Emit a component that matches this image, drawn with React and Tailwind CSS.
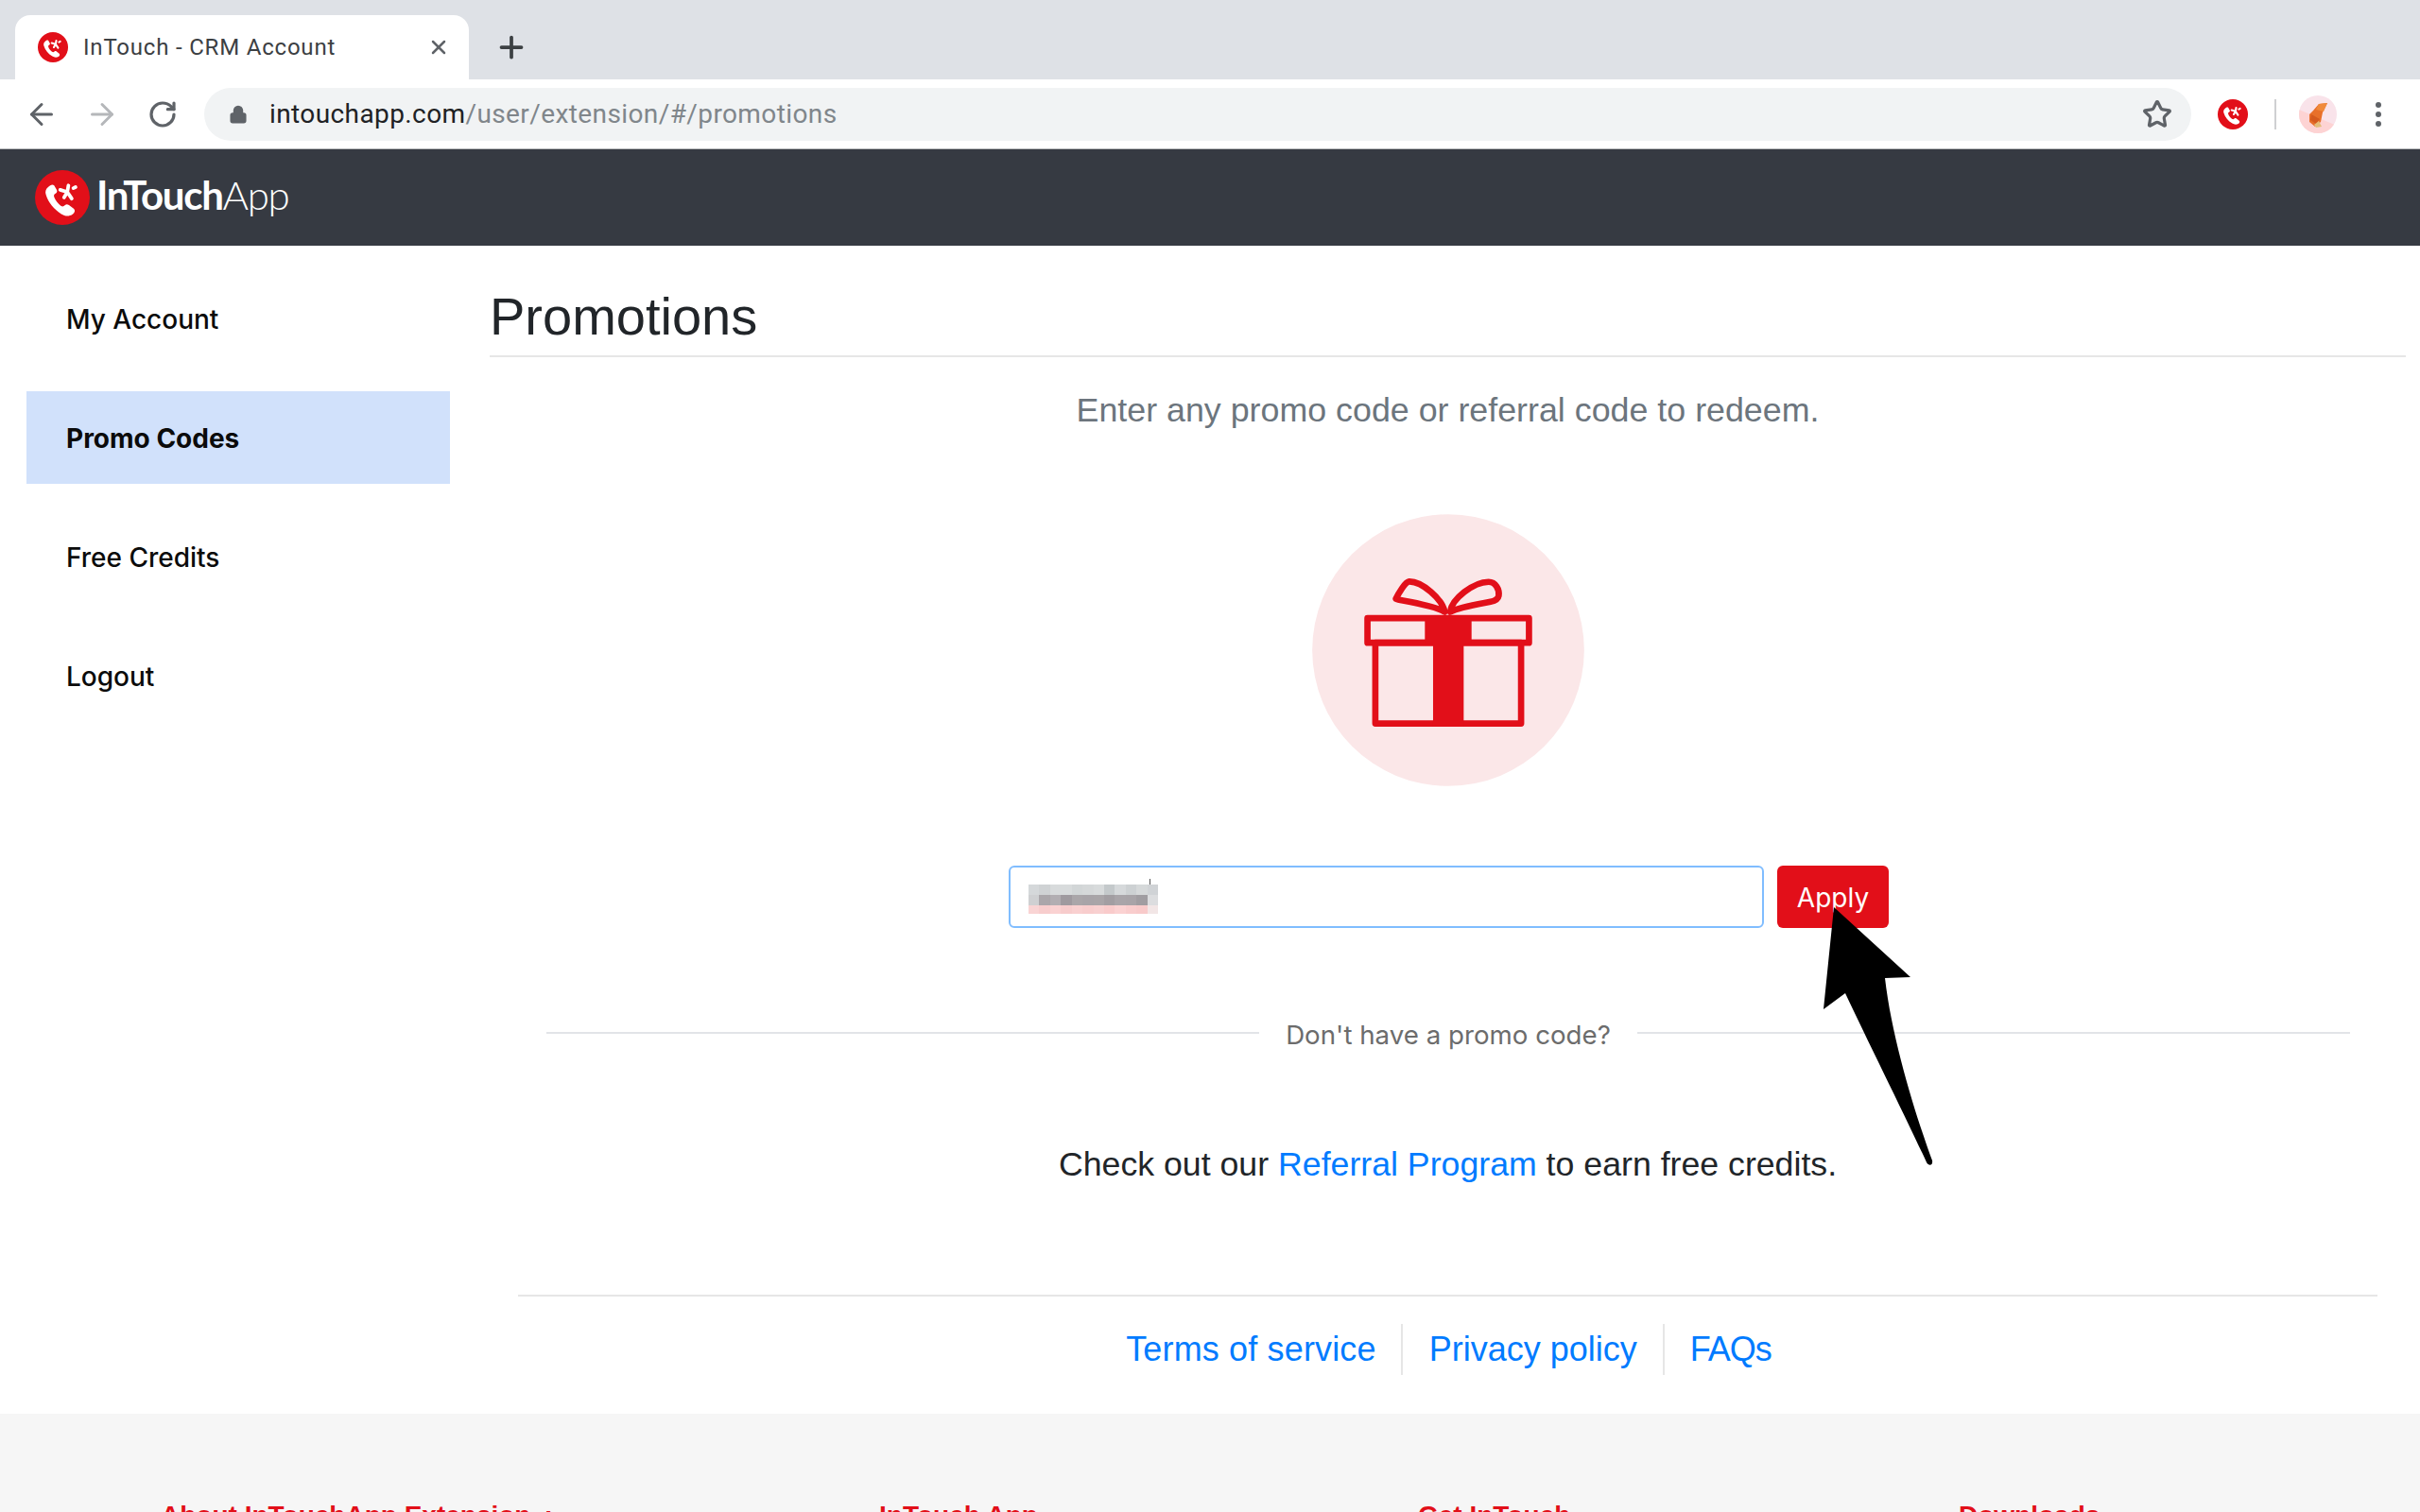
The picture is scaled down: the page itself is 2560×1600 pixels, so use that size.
import React from "react";
import { ArrowLeft, ArrowRight, RotateCw, Lock, Star, X, Plus } from "lucide-react";

const NAV_ITEMS = [
  { label: "My Account" },
  { label: "Promo Codes", active: true },
  { label: "Free Credits" },
  { label: "Logout" },
];

const FOOTER_HEADINGS = [
  { label: "About InTouchApp Extension", suffix: ":", width: "w-[760px]" },
  { label: "InTouch App", width: "w-[570px]" },
  { label: "Get InTouch", width: "w-[572px]" },
  { label: "Downloads", width: "w-[300px]" },
];

function LogoMark({ className }) {
  return (
    <svg viewBox="0 0 100 100" className={className}>
      <circle cx="50" cy="50" r="50" fill="#e20f19" />
      <path
        d="M24 31c-4 3-6 8-4 14 4 14 15 27 28 35 6 4 14 5 20 1 5-3 6-8 2-11l-8-6c-3-2-5-2-7 0-3 3-5 3-8 1-5-4-10-10-12-16-1-3 0-5 2-6 4-2 4-5 2-8l-4-7c-3-3-7-1-11 3z"
        fill="#fff"
      />
      <path
        d="M59 40L61 28M59 40L46 36M59 40L67 52M59 40L53 50M70 33L74 31"
        fill="none"
        stroke="#fff"
        strokeWidth="6.5"
        strokeLinecap="round"
      />
    </svg>
  );
}

function Avatar() {
  return (
    <svg viewBox="0 0 40 40" className="w-10 h-10">
      <clipPath id="avatar-clip">
        <circle cx="20" cy="20" r="20" />
      </clipPath>
      <g clipPath="url(#avatar-clip)">
        <rect width="40" height="40" fill="#f9e3ea" />
        <path d="M0 15L40 32V40H0z" fill="#fdd3d3" />
        <path d="M30 8L21 9L15 16L11 20L11 28L17 33L23 28L25 18z" fill="#e8702a" />
        <path d="M30 8L21 9L18 15L26 17z" fill="#f08a3c" />
        <path d="M13 20L22 25L18 30L12 26z" fill="#d55a1e" />
        <path d="M16 31L21 27L24 33L18 34z" fill="#e3bd78" />
      </g>
    </svg>
  );
}

function GiftIcon() {
  return (
    <svg viewBox="85 42 862 863" className="w-[288px] h-[288px]">
      <circle cx="516" cy="473.5" r="431" fill="#fbe7e8" />
      <g fill="none" stroke="#e20f19" strokeWidth="20" strokeLinejoin="round">
        <rect x="260" y="372" width="512" height="78" />
        <rect x="285" y="450" width="462" height="256" />
        <path d="M505 352c-8-40-72-97-113-96-12 1-34 38-42 55 0 3 120 18 155 41z" />
        <path d="M522 352c6-42 74-94 122-95 22 0 35 24 32 44-2 12-12 16-26 19-30 6-96 16-128 32z" />
      </g>
      <path d="M442 372h148v78h-25v266h-97V450h-26z" fill="#e20f19" />
    </svg>
  );
}

function BlurredCode() {
  const rows = [
    { y: 6, h: 11, fills: ["#d5d8da", "#cfd2d4", "#d8dbdc", "#d8dbdc", "#d2d6d7", "#d5d8d9", "#d8dbdc", "#c4c9cb", "#d6d9db", "#cdd1d3", "#d6d9da", "#d0d3d6"] },
    { y: 17, h: 11, fills: ["#cfd0d2", "#aaa6aa", "#b2aeb2", "#9f9a9f", "#aaa6a9", "#a8a4a8", "#a9a5a8", "#a29ea2", "#a9a5a9", "#a8a4a8", "#a09da1", "#dcdddf"] },
    { y: 28, h: 9, fills: ["#f9d4d4", "#f7cdcd", "#fad2d2", "#f7cccc", "#f9d0d0", "#f8cdcd", "#f8d0d0", "#f9cbcb", "#fbd2d2", "#f9cdcd", "#f8caca", "#f2e6e6"] },
  ];
  return (
    <svg viewBox="0 0 137 37" className="w-[137px] h-[37px] -mt-[2px]" shapeRendering="crispEdges">
      <rect x="128" y="0" width="1" height="6" fill="#555" />
      {rows.map((row) =>
        row.fills.map((fill, c) => (
          <rect key={`${row.y}-${c}`} x={c * 11.42} y={row.y} width="11.5" height={row.h} fill={fill} />
        ))
      )}
    </svg>
  );
}

function BrowserChrome() {
  return (
    <div className="shrink-0">
      {/* Tab strip */}
      <div className="h-[84px] bg-[#dee1e6] flex items-end pl-4">
        <div className="w-[480px] h-[68px] bg-white rounded-t-[16px] flex items-center pl-6 pr-[20px]">
          <LogoMark className="w-8 h-8 shrink-0" />
          <span className="ml-[16px] text-[24px] text-[#3c4043] font-['Roboto',sans-serif] tracking-[0.8px]">InTouch - CRM Account</span>
          <X className="ml-auto w-[24px] h-[24px] text-[#5f6368]" strokeWidth={2.5} />
        </div>
        <div className="ml-[27px] mb-[16px] text-[#3c4043]">
          <Plus className="w-[36px] h-[36px]" strokeWidth={2.5} />
        </div>
      </div>
      {/* Toolbar */}
      <div className="h-[73px] bg-white flex items-center pl-[26px]">
        <ArrowLeft className="w-[36px] h-[36px] text-[#5f6368] shrink-0" strokeWidth={2} />
        <ArrowRight className="ml-[28px] w-[36px] h-[36px] text-[#b5b7ba] shrink-0" strokeWidth={2} />
        <RotateCw className="ml-[30px] w-[32px] h-[32px] text-[#5f6368] shrink-0" strokeWidth={2.4} />
        <div className="ml-[28px] w-[2102px] h-[56px] shrink-0 rounded-full bg-[#f1f3f4] flex items-center pl-[26px] pr-[20px]">
          <Lock className="w-[20px] h-[20px] text-[#5f6368] fill-[#5f6368] shrink-0" strokeWidth={2.5} />
          <div className="ml-[23px] text-[28px] font-['Roboto',sans-serif] text-[#202124] tracking-[0.4px]">
            intouchapp.com<span className="text-[#80868b]">/user/extension/#/promotions</span>
          </div>
          <Star className="ml-auto w-[32px] h-[32px] text-[#5f6368]" strokeWidth={2.4} />
        </div>
        <LogoMark className="ml-[28px] w-8 h-8 shrink-0" />
        <div className="ml-[28px] w-[2px] h-8 bg-[#cfd0d2] shrink-0" />
        <div className="ml-[24px] shrink-0">
          <Avatar />
        </div>
        <div className="ml-[41px] flex flex-col gap-[4px] shrink-0">
          <div className="w-[6px] h-[6px] rounded-full bg-[#5f6368]" />
          <div className="w-[6px] h-[6px] rounded-full bg-[#5f6368]" />
          <div className="w-[6px] h-[6px] rounded-full bg-[#5f6368]" />
        </div>
      </div>
    </div>
  );
}

function Sidebar() {
  return (
    <div className="w-[518px] shrink-0 pl-[28px] pr-[42px] pt-[28px] flex flex-col gap-[28px]">
      {NAV_ITEMS.map((item) => (
        <div
          key={item.label}
          className={`h-[98px] flex items-center pl-[42px] pt-[2px] text-[28px] text-[#0b0b0b] font-['Inter',sans-serif] ${
            item.active ? "bg-[#d1e1fb] font-bold" : "font-medium"
          }`}
        >
          {item.label}
        </div>
      ))}
    </div>
  );
}

function Main() {
  return (
    <div className="w-[2027px] flex flex-col font-['Liberation_Sans',sans-serif]">
      <div className="h-[118px] border-b-2 border-[#e6e6e6] flex items-end pb-[5px]">
        <h1 className="text-[56px] leading-[72px] text-[#212529]">Promotions</h1>
      </div>
      <p className="mt-[29px] text-center text-[35.8px] leading-[54px] text-[#6c757d]">
        Enter any promo code or referral code to redeem.
      </p>
      <div className="mt-[83px] flex justify-center">
        <GiftIcon />
      </div>
      <div className="mt-[84px] flex justify-center gap-[14px] pl-[2px]">
        <div className="w-[799px] h-[66px] rounded-[6px] border-2 border-[#80bdff] flex items-center pl-[19px]">
          <BlurredCode />
        </div>
        <button className="w-[118px] h-[66px] pt-[1px] rounded-[6px] bg-[#e20f19] text-white text-[28px] font-['Inter',sans-serif]">
          Apply
        </button>
      </div>
      <div className="mt-[93px] ml-[60px] mr-[59px] flex items-center gap-[28px]">
        <div className="flex-1 h-[2px] mb-[6px] bg-[#e2e4e8]" />
        <span className="text-[27.7px] text-[#6c6c6c] font-['Inter',sans-serif]">Don't have a promo code?</span>
        <div className="flex-1 h-[2px] mb-[6px] bg-[#e2e4e8]" />
      </div>
      <p className="mt-[88px] text-center text-[35.7px] leading-[54px] text-[#212529]">
        Check out our <span className="text-[#007bff]">Referral Program</span> to earn free credits.
      </p>
      <div className="mt-[111px] mx-[30px] border-t-2 border-[#e6e6e6] flex justify-center pt-[29px]">
        <div className="ml-[2px] flex items-center text-[36px] leading-[54px] text-[#007bff]">
          <span className="pr-[26px] border-r-2 border-[#e6e6e6] tracking-[0.15px]">Terms of service</span>
          <span className="pl-[28px] pr-[27px] border-r-2 border-[#e6e6e6]">Privacy policy</span>
          <span className="pl-[27px] tracking-[-1px]">FAQs</span>
        </div>
      </div>
    </div>
  );
}

export default function App() {
  return (
    <div className="relative w-[2560px] h-[1600px] overflow-hidden bg-white flex flex-col">
      <BrowserChrome />
      <div className="h-[103px] shrink-0 bg-[#363a42] border-t border-[#b9bbbd] flex items-center pl-[37px]">
        <LogoMark className="w-[58px] h-[58px] shrink-0" />
        <div className="ml-[7px] mb-[6px] text-[42px] leading-none text-white font-['Lato',sans-serif] tracking-[-1.3px] font-bold">
          InTouch<span className="font-light">App</span>
        </div>
      </div>
      <div className="h-[1236px] shrink-0 flex">
        <Sidebar />
        <Main />
      </div>
      <div className="flex-1 bg-[#f6f6f6] pt-[87px] pl-[170px] flex text-[#e20f19] text-[28px] font-bold font-['Liberation_Sans',sans-serif]">
        {FOOTER_HEADINGS.map((heading) => (
          <div key={heading.label} className={`${heading.width} shrink-0`}>
            {heading.label}
            {heading.suffix && <span className="ml-[14px]">{heading.suffix}</span>}
          </div>
        ))}
      </div>
      {/* Annotation arrow over the page */}
      <svg viewBox="0 0 2560 1600" className="absolute inset-0 w-[2560px] h-[1600px] pointer-events-none">
        <path
          d="M1940 960L2021 1034L1994 1035C2002 1105 2030 1190 2044 1228C2045 1234 2040 1234 2038 1230C2015 1180 1975 1100 1952 1051L1929 1068z"
          fill="#000"
        />
      </svg>
    </div>
  );
}
